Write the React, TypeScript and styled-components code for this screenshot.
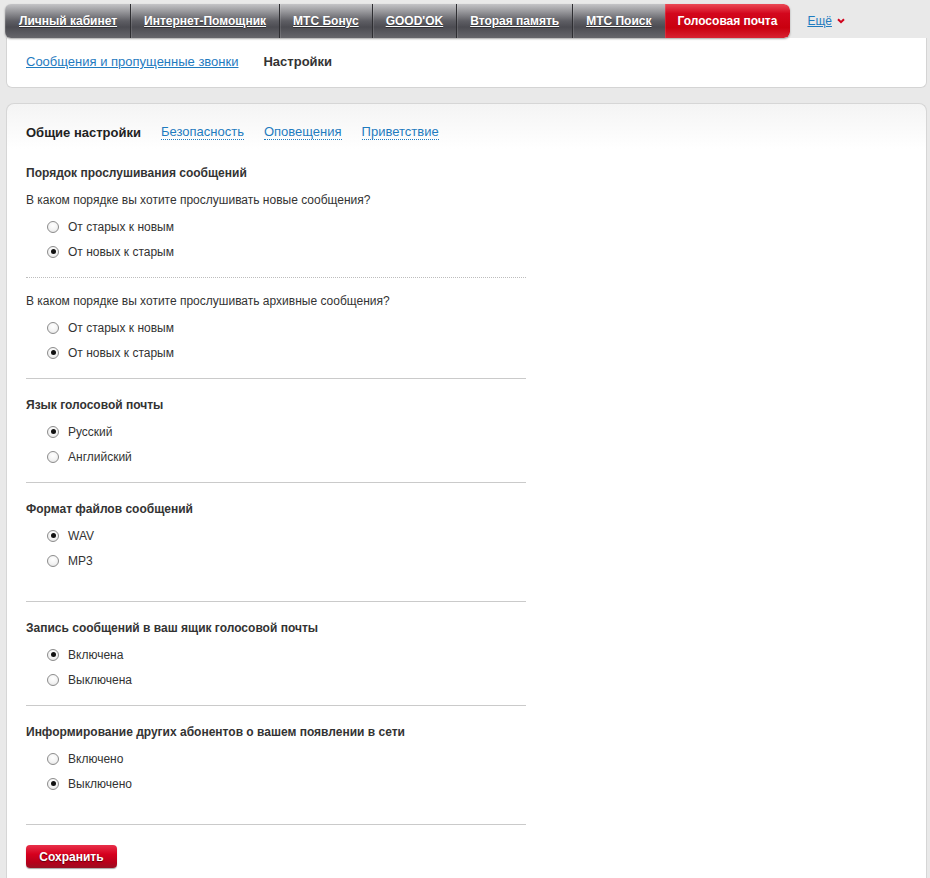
import React from 'react'
import styled, {createGlobalStyle} from 'styled-components'

const Global = createGlobalStyle`
  body {
    margin: 0;
    background: #e9e9e9;
    font-family: "Liberation Sans", Arial, sans-serif;
    font-size: 12px;
    color: #333;
  }
`
const Page = styled.div`
  padding: 4px 3px 0 5px;
`
const TopBar = styled.div`
  display: flex;
  align-items: center;
  height: 34px;
  position: relative;
  z-index: 2;
`
const Tabs = styled.div`
  display: flex;
  height: 100%;
  border-radius: 6px;
  box-shadow: 0 1px 2px rgba(0, 0, 0, .35);
  overflow: hidden;
`
const Tab = styled.a<{active?: boolean}>`
  display: flex;
  align-items: center;
  padding: 0 13px 0 13px;
  font-weight: bold;
  font-size: 12px;
  color: #fff;
  text-decoration: ${p => p.active ? 'none' : 'underline'};
  border-left: ${p => p.active ? 'none' : '1px solid #2e2e32'};
  box-shadow: inset 1px 0 0 rgba(255, 255, 255, .12);
  background: ${p => p.active
    ? 'linear-gradient(#ea4a56 0%, #d3071d 28%, #c9000f 70%, #d82232 100%)'
    : 'linear-gradient(#c4c4c7 0%, #98989c 22%, #5e5e64 50%, #4c4c52 68%, #66666b 100%)'};
  text-shadow: ${p => p.active ? 'none' : '0 1px 0 rgba(0,0,0,.4)'};
  white-space: nowrap;

  &:first-child {
    border-left: none;
    padding-left: 14px;
  }
  &:last-child {
    border-radius: 0 6px 6px 0;
    padding: 0 13px 0 13px;
  }
`
const More = styled.a`
  margin-left: 17px;
  display: flex;
  align-items: center;
  gap: 5px;
  color: #1f7bbf;
  font-size: 12px;
`
const MoreText = styled.span`
  text-decoration: underline;
`
const SubPanel = styled.div`
  margin-left: 1px;
  height: 47px;
  background: #fff;
  border: 1px solid #d4d4d4;
  border-top: none;
  border-radius: 0 0 6px 6px;
  display: flex;
  align-items: center;
  gap: 25px;
  padding: 0 19px 2px;
`
const SubLink = styled.a`
  color: #1f7bbf;
  text-decoration: underline;
  font-size: 13px;
`
const SubCurrent = styled.span`
  font-size: 13px;
  font-weight: bold;
  color: #333;
`
const Panel = styled.div`
  margin: 15px 0 0 1px;
  background: linear-gradient(#f4f4f4 0px, #fff 45px);
  border: 1px solid #d6d6d6;
  border-bottom: none;
  border-radius: 8px 8px 0 0;
  padding: 20px 19px 10px;
  min-height: 760px;
`
const InnerTabs = styled.div`
  display: flex;
  gap: 20px;
  align-items: center;
  height: 16px;
  margin-bottom: 20px;
`
const InnerTab = styled.a<{active?: boolean}>`
  font-size: 13px;
  font-weight: ${p => p.active ? 'bold' : 'normal'};
  color: ${p => p.active ? '#222' : '#1f7bbf'};
  border-bottom: ${p => p.active ? 'none' : '1px dotted #1f7bbf'};
  line-height: 15px;
`
const Form = styled.div`
  width: 500px;
`
const Section = styled.div<{extra?: number; dotted?: boolean}>`
  padding: 13px 0 ${p => 13 + (p.extra || 0)}px;
  border-bottom: 1px ${p => p.dotted ? 'dotted #bdbdbd' : 'solid #cacaca'};
  &:first-child {
    padding-top: 0;
  }
`
const SubSection = styled(Section)`
  padding-top: 10px;
`
const Heading = styled.div`
  font-weight: bold;
  line-height: 26px;
  margin-bottom: 1px;
`
const Question = styled.div`
  line-height: 26px;
  margin-bottom: 1px;
`
const Option = styled.label`
  display: flex;
  align-items: center;
  height: 25px;
  padding-left: 21px;
  gap: 9px;
  color: #333;
`
const Radio = styled.span<{checked?: boolean}>`
  width: 12px;
  height: 12px;
  box-sizing: border-box;
  border-radius: 50%;
  border: 1px solid #8c8c8c;
  background: radial-gradient(circle at 50% 35%, #fff 0%, #f3f3f3 55%, #dcdcdc 100%);
  display: flex;
  align-items: center;
  justify-content: center;

  &::after {
    content: '';
    width: 5px;
    height: 5px;
    border-radius: 50%;
    background: ${p => p.checked ? '#111' : 'transparent'};
  }
`
const SaveButton = styled.button`
  margin-top: 20px;
  width: 91px;
  height: 23px;
  border: none;
  border-radius: 4px;
  background: linear-gradient(#e8304a 0%, #d6001e 40%, #b8001a 75%, #9a0f22 100%);
  box-shadow: 0 1px 1px rgba(0, 0, 0, .35);
  color: #fff;
  font-family: "Liberation Sans", Arial, sans-serif;
  font-weight: bold;
  font-size: 12px;
  text-shadow: 0 1px 1px rgba(0, 0, 0, .5);
  padding: 0;
`

type Opt = {label: string; checked?: boolean}

const Options: React.FC<{items: Opt[]}> = ({items}) => (
    <>
        {items.map(o => (
            <Option key={o.label}>
                <Radio checked={o.checked} />
                <span>{o.label}</span>
            </Option>
        ))}
    </>
)

const Chevron = () => (
    <svg width="8" height="6" viewBox="0 0 8 6">
        <path d="M1 1.2 L4 4.2 L7 1.2" stroke="#d0021b" strokeWidth="2" fill="none" />
    </svg>
)

const order: Opt[] = [
    {label: 'От старых к новым'},
    {label: 'От новых к старым', checked: true},
]

export default function App() {
    return (
        <Page>
            <Global />
            <TopBar>
                <Tabs>
                    <Tab>Личный кабинет</Tab>
                    <Tab>Интернет-Помощник</Tab>
                    <Tab>МТС Бонус</Tab>
                    <Tab>GOOD'OK</Tab>
                    <Tab>Вторая память</Tab>
                    <Tab>МТС Поиск</Tab>
                    <Tab active>Голосовая почта</Tab>
                </Tabs>
                <More><MoreText>Ещё</MoreText><Chevron /></More>
            </TopBar>
            <SubPanel>
                <SubLink>Сообщения и пропущенные звонки</SubLink>
                <SubCurrent>Настройки</SubCurrent>
            </SubPanel>
            <Panel>
                <InnerTabs>
                    <InnerTab active>Общие настройки</InnerTab>
                    <InnerTab>Безопасность</InnerTab>
                    <InnerTab>Оповещения</InnerTab>
                    <InnerTab>Приветствие</InnerTab>
                </InnerTabs>
                <Form>
                    <Section dotted>
                        <Heading>Порядок прослушивания сообщений</Heading>
                        <Question>В каком порядке вы хотите прослушивать новые сообщения?</Question>
                        <Options items={order} />
                    </Section>
                    <SubSection>
                        <Question>В каком порядке вы хотите прослушивать архивные сообщения?</Question>
                        <Options items={order} />
                    </SubSection>
                    <Section>
                        <Heading>Язык голосовой почты</Heading>
                        <Options items={[{label: 'Русский', checked: true}, {label: 'Английский'}]} />
                    </Section>
                    <Section extra={15}>
                        <Heading>Формат файлов сообщений</Heading>
                        <Options items={[{label: 'WAV', checked: true}, {label: 'MP3'}]} />
                    </Section>
                    <Section>
                        <Heading>Запись сообщений в ваш ящик голосовой почты</Heading>
                        <Options items={[{label: 'Включена', checked: true}, {label: 'Выключена'}]} />
                    </Section>
                    <Section extra={15}>
                        <Heading>Информирование других абонентов о вашем появлении в сети</Heading>
                        <Options items={[{label: 'Включено'}, {label: 'Выключено', checked: true}]} />
                    </Section>
                    <SaveButton>Сохранить</SaveButton>
                </Form>
            </Panel>
        </Page>
    )
}
